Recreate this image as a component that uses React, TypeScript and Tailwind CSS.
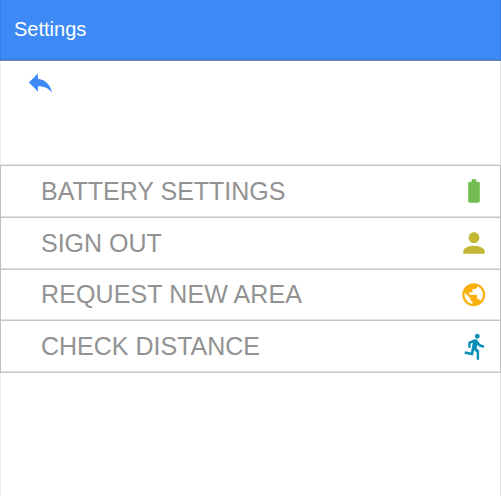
import { MdBatteryFull, MdPerson, MdPublic, MdDirectionsRun, MdReply } from 'react-icons/md';

const items = [
  { label: 'BATTERY SETTINGS', Icon: MdBatteryFull, text: '', style: 'size-[28px] text-[#72bc50]' },
  { label: 'SIGN OUT', Icon: MdPerson, text: '', style: 'size-[32px] text-[#c2b835]' },
  { label: 'REQUEST NEW AREA', Icon: MdPublic, text: 'tracking-[0.11px]', style: 'size-[27.5px] text-[#f9b00e]' },
  { label: 'CHECK DISTANCE', Icon: MdDirectionsRun, text: '', style: 'mb-px ml-[3px] size-[29px] text-[#078eb6]' },
];

export default function App() {
  return (
    <div className="flex h-[496px] w-[501px] flex-col overflow-hidden bg-white font-['Liberation_Sans',Arial,sans-serif]">
      <header className="flex h-[61px] shrink-0 items-center border-x border-b border-x-[#387ee2] border-b-[#7187aa] bg-[#3d8af7] px-[13px] pb-[3px] text-[20px] text-white shadow-[inset_0_-1px_0_#3a7cdd]">Settings</header>
      <main className="flex-1 border-x border-l-[#f0f0f0] border-r-[#dedede]">
        <div className="h-[103px] pt-[6px] pl-[24px]">
          <MdReply className="size-[31px] text-[#3d8af7]" />
        </div>
        <ul className="-mx-px border-t border-[#e6e6e6]">
          {items.map(({ label, Icon, text, style }) => (
            <li key={label} className="flex h-[51.8px] items-center border-x border-t border-x-[#c0c0c0] border-t-[#c6c6c6] pl-[40px] shadow-[inset_0_-1px_0_#e2e2e2]">
              <span className={`flex-1 text-[25px] leading-none text-[#929292] ${text}`}>{label}</span>
              <span className="mr-[9px] flex w-[34px] shrink-0 justify-center">
                <Icon className={`shrink-0 ${style}`} />
              </span>
            </li>
          ))}
          <li className="h-px bg-[#c6c6c6]" />
        </ul>
      </main>
    </div>
  );
}
